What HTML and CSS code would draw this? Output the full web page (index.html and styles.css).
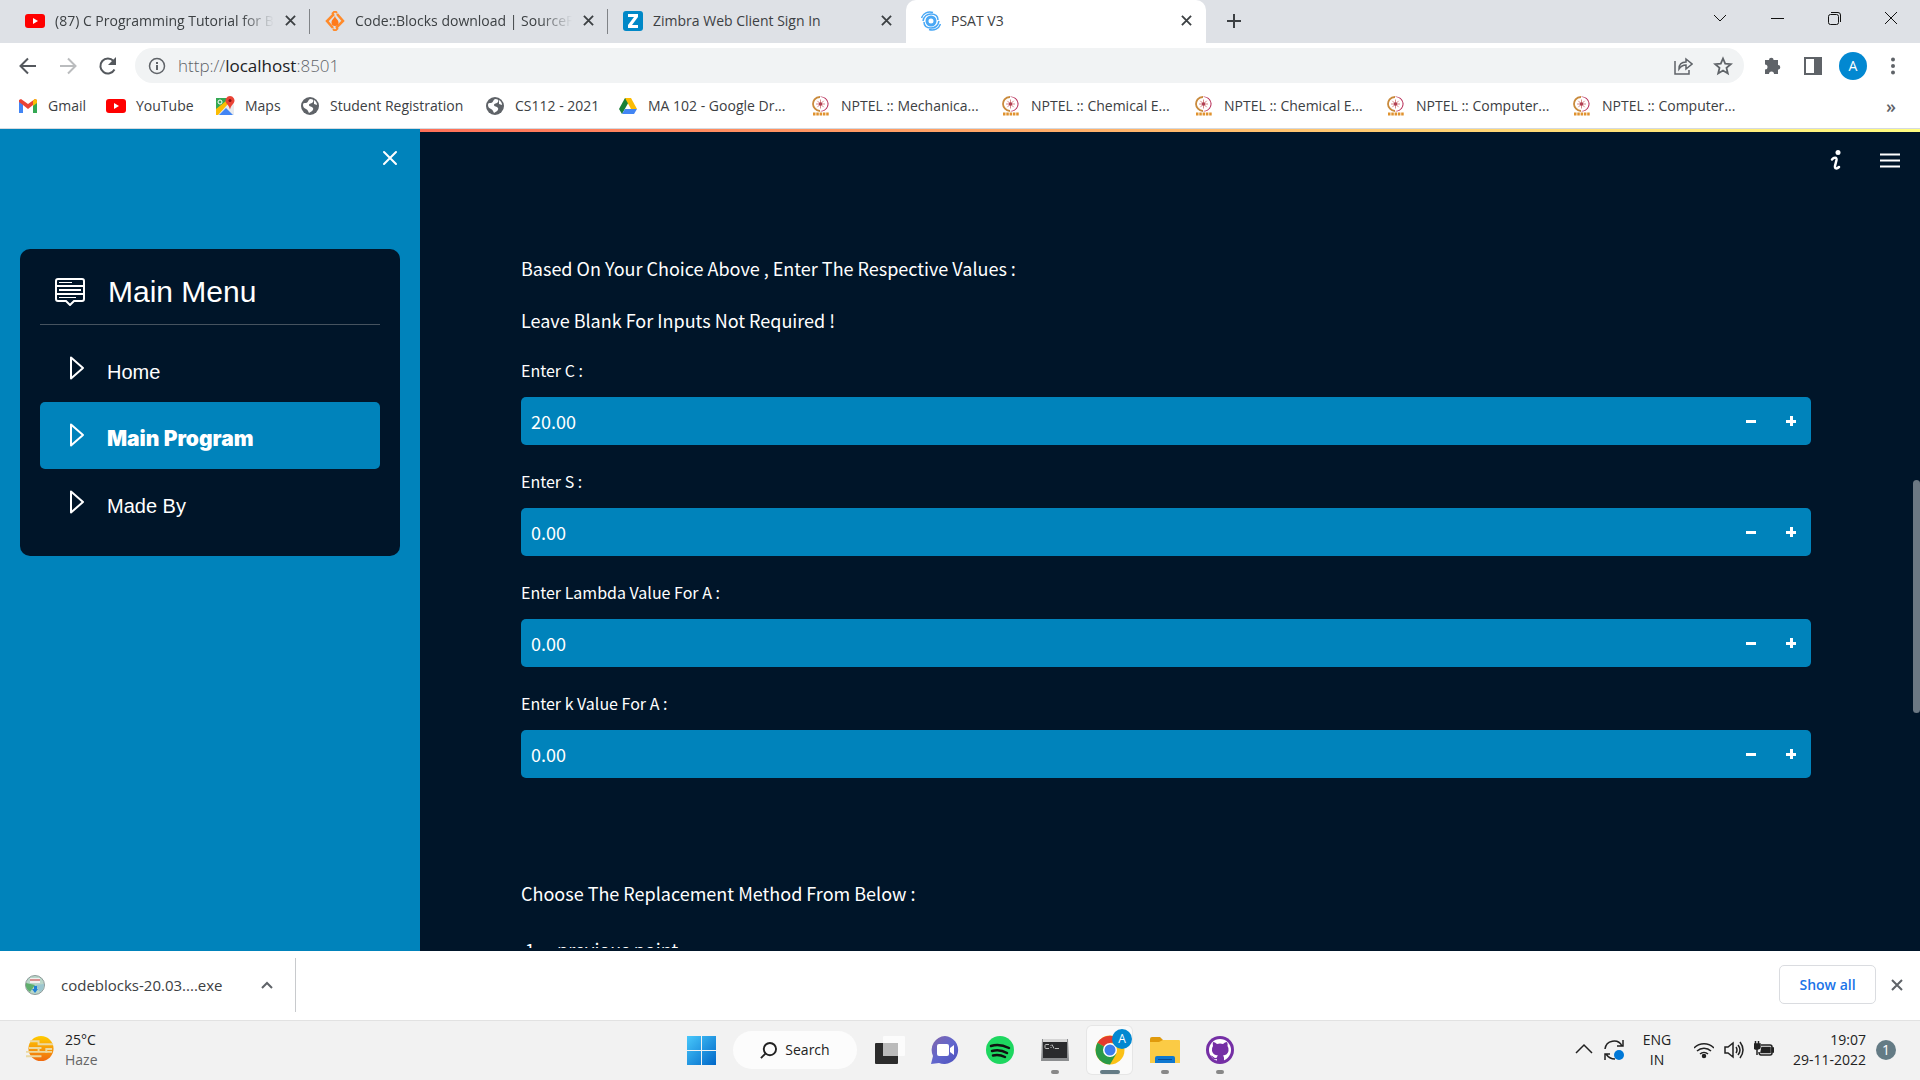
FILE: index.html
```html
<!DOCTYPE html>
<html lang="en">
<head>
<meta charset="utf-8">
<title>PSAT V3</title>
<link rel="stylesheet" href="styles.css">
</head>
<body>
<svg class="defs" aria-hidden="true">
  <defs>
    <symbol id="close" viewBox="0 0 12 12"><path d="M1 1l10 10M11 1L1 11" fill="none" stroke="currentColor" stroke-width="2"/></symbol>
    <symbol id="youtube" viewBox="0 0 20 16"><rect y="1" width="20" height="14" rx="3" fill="#f00"/><path d="M8 5l5 3-5 3z" fill="#fff"/></symbol>
    <symbol id="globe" viewBox="0 0 20 20"><circle cx="10" cy="10" r="9" fill="#5f6368"/><path d="M10 3c3 0 4 1 3 3s-4 1-4 3 3 1 4 3-2 4-4 5c-1-2-1-3-3-4s-3-2-3-4 1-2 3-2 2-3 4-4z" fill="#fff"/><path d="M14 4c2 1 3 3 3 5l-3-1z" fill="#fff"/></symbol>
    <symbol id="nptel" viewBox="0 0 20 20"><path d="M9 1C4 1 2 5 2 8s3 7 7 7" fill="none" stroke="#c98a3c" stroke-width="1.800"/><path d="M9 0.500a7.500 7.500 0 0 1 2 15l-2-.5a7 7 0 0 0 1-14z" fill="#b8305a"/><path d="M9.500 3.500v9M5 8h9M6.300 4.800l6.400 6.400M12.700 4.800l-6.400 6.400" stroke="#d98a8a" stroke-width="1"/><circle cx="9.500" cy="8" r="1.800" fill="#b04055"/><path d="M2 18h16" stroke="#e0922e" stroke-width="3" stroke-dasharray="2.500 .8"/></symbol>
    <symbol id="play" viewBox="0 0 16 24"><path d="M2 1.500v21L14 12z" fill="none" stroke="currentColor" stroke-width="2" stroke-linejoin="round"/></symbol>
  </defs>
</svg>

<header class="tabs">
  <div class="tab">
    <svg class="fav"><use href="#youtube"/></svg>
    <span class="tab-title fade">(87) C Programming Tutorial for Beginners</span>
    <button class="tab-close" aria-label="Close tab"><svg><use href="#close"/></svg></button>
  </div>
  <div class="tab">
    <svg class="fav" viewBox="0 0 20 20"><path d="M9 3l-7 7 6 7M11 17l7-7-6-7" fill="none" stroke="#ff8a2a" stroke-width="2.500"/><path d="M7 3l3-3 2 2M8 18l2 2 3-3" fill="none" stroke="#ff8a2a" stroke-width="2"/><path d="M10 4.500c0 3 3.500 4 3.500 7a3.500 3.500 0 0 1-7 0c0-3 3-4 3.500-7z" fill="#ff7a1a"/></svg>
    <span class="tab-title fade">Code::Blocks download | SourceForge.net</span>
    <button class="tab-close" aria-label="Close tab"><svg><use href="#close"/></svg></button>
  </div>
  <div class="tab last">
    <svg class="fav" viewBox="0 0 20 20"><rect width="20" height="20" rx="3" fill="#0088c7"/><path d="M5 3h10v3L9 14h6v3H5v-3l6-8H5z" fill="#fff"/></svg>
    <span class="tab-title">Zimbra Web Client Sign In</span>
    <button class="tab-close" aria-label="Close tab"><svg><use href="#close"/></svg></button>
  </div>
  <div class="tab active">
    <svg class="fav" viewBox="0 0 20 20" fill="none" stroke="#4aa8f5"><circle cx="10" cy="10" r="4" stroke-width="3"/><path d="M17 9c0-4-3-6-7-6S3 5 2 10M3 11c0 4 3 6 7 6s7-2 8-7" stroke-width="1.500"/><path d="M.5 7C2 2 7 0 12 1.500M19.500 13c-1.500 5-6.500 7-11.500 5.500" stroke-width="1.500"/></svg>
    <span class="tab-title">PSAT V3</span>
    <button class="tab-close" aria-label="Close tab"><svg><use href="#close"/></svg></button>
  </div>
  <button class="new-tab" aria-label="New tab"><svg viewBox="0 0 16 16"><path d="M8 1v14M1 8h14" stroke="currentColor" stroke-width="2"/></svg></button>
  <div class="window-buttons">
    <button aria-label="Search tabs"><svg viewBox="0 0 14 14"><path d="M1 4l6 6 6-6" /></svg></button>
    <button aria-label="Minimize"><svg viewBox="0 0 14 14"><path d="M1 7.500h13"/></svg></button>
    <button aria-label="Restore"><svg viewBox="0 0 14 14"><rect x="1.500" y="3.500" width="10" height="10" rx="2"/><path d="M4 1.500h7a2.500 2.500 0 0 1 2.500 2.500v7"/></svg></button>
    <button aria-label="Close"><svg viewBox="0 0 14 14"><path d="M1 1l12 12M13 1L1 13"/></svg></button>
  </div>
</header>

<div class="toolbar">
  <div class="nav-buttons">
    <button aria-label="Back"><svg viewBox="0 0 20 20"><path d="M18 10H3M10 2.500L2.500 10l7.500 7.500"/></svg></button>
    <button aria-label="Forward" class="off"><svg viewBox="0 0 20 20"><path d="M2 10h15M10 2.500l7.500 7.500-7.500 7.500"/></svg></button>
    <button aria-label="Reload"><svg viewBox="0 0 20 20"><path d="M16.500 13.500A7.500 7.500 0 1 1 15.500 5"/><path d="M18 1v8h-8z" fill="currentColor" stroke="none"/></svg></button>
  </div>
  <div class="omnibox">
    <svg class="info" viewBox="0 0 18 18"><circle cx="9" cy="9" r="7.500" fill="none" stroke="#5f6368" stroke-width="1.500"/><path d="M9 8v5M9 5v2" stroke="#5f6368" stroke-width="2"/></svg>
    <div class="url">http://<b>localhost</b>:8501</div>
    <button aria-label="Share"><svg viewBox="0 0 20 20"><path d="M2 5v13h14v-4M6 13c0-5 3-7 7-7V3l6 5-6 5v-4c-3 0-5 1-7 4z" fill="none" stroke="#5f6368" stroke-width="1.500"/></svg></button>
    <button aria-label="Bookmark"><svg viewBox="0 0 20 20"><path d="M10 2.500l2.200 5.200 5.600.5-4.300 3.700 1.300 5.500L10 14.500l-4.800 2.900 1.300-5.500-4.300-3.700 5.600-.5z" fill="none" stroke="#5f6368" stroke-width="1.800"/></svg></button>
  </div>
  <div class="tools">
    <button aria-label="Extensions"><svg viewBox="0 0 20 20"><path d="M2 4h4a2.300 2.300 0 1 1 4.600 0H15v5a2.300 2.300 0 1 1 0 4.600V18h-4a2.500 2.500 0 0 0-5 0H2v-4.500a2.500 2.500 0 0 0 0-5z" fill="#5f6368"/></svg></button>
    <button aria-label="Side panel"><svg viewBox="0 0 20 20"><path d="M1 1h18v18H1z" fill="#5f6368"/><path d="M3 3h8v14H3z" fill="#fff"/></svg></button>
    <button aria-label="Profile" class="avatar">A</button>
    <button aria-label="More"><svg viewBox="0 0 20 20" fill="#5f6368"><circle cx="10" cy="3.500" r="2"/><circle cx="10" cy="10" r="2"/><circle cx="10" cy="16.500" r="2"/></svg></button>
  </div>
</div>

<nav class="bookmarks" aria-label="Bookmarks">
  <a href="#"><svg viewBox="0 0 20 20"><path d="M1 4v13h4V9l5 4 5-4v8h4V4l-2-1-7 5-7-5z" fill="#ea4335"/><path d="M1 6v11h4V9z" fill="#4285f4"/><path d="M19 6v11h-4V9z" fill="#34a853"/><path d="M15 4.500L17 3q2 0 2 2v2l-4 3z" fill="#fbbc04"/></svg>Gmail</a>
  <a href="#"><svg><use href="#youtube"/></svg>YouTube</a>
  <a href="#"><svg viewBox="0 0 20 20"><path d="M1 2h17v17H1z" fill="#34a853"/><path d="M1 19V16L15 5l4 4v10z" fill="#e8eaed"/><path d="M4 19l7-7 7 7z" fill="#4285f4"/><path d="M1 13v6h2L13 8l-2-3z" fill="#fbbc04"/><path d="M15 0a4.500 4.500 0 0 1 4 6.500c-1 2-3 3-4 7-1-4-3-5-4-7A4.500 4.500 0 0 1 15 0z" fill="#ea4335"/><circle cx="15" cy="4.500" r="1.500" fill="#811"/><circle cx="5" cy="6" r="2" fill="none" stroke="#fff"/></svg>Maps</a>
  <a href="#"><svg><use href="#globe"/></svg>Student Registration</a>
  <a href="#"><svg><use href="#globe"/></svg>CS112 - 2021</a>
  <a href="#"><svg viewBox="0 0 20 20"><path d="M7 2h6l-9 16-3-5z" fill="#188038"/><path d="M7 2h6l6 11h-6z" fill="#fbbc04"/><path d="M4 18l3-5h12l-3 5z" fill="#4285f4"/></svg>MA 102 - Google Dr...</a>
  <a href="#"><svg><use href="#nptel"/></svg>NPTEL :: Mechanica...</a>
  <a href="#"><svg><use href="#nptel"/></svg>NPTEL :: Chemical E...</a>
  <a href="#"><svg><use href="#nptel"/></svg>NPTEL :: Chemical E...</a>
  <a href="#"><svg><use href="#nptel"/></svg>NPTEL :: Computer...</a>
  <a href="#"><svg><use href="#nptel"/></svg>NPTEL :: Computer...</a>
  <button class="overflow" aria-label="More bookmarks">»</button>
</nav>

<div class="page">
  <aside class="sidebar">
    <button class="sidebar-close" aria-label="Close sidebar"><svg viewBox="0 0 16 16"><path d="M2 2l12 12M14 2L2 14" stroke="#fff" stroke-width="2" stroke-linecap="round"/></svg></button>
    <nav class="menu">
      <h2 class="menu-title"><svg viewBox="0 0 30 28" fill="none" stroke="#fff" stroke-width="2"><path d="M3 1h24q2 0 2 2v18q0 2-2 2h-8l-4 4-4-4H3q-2 0-2-2V3q0-2 2-2z"/><path d="M4 4.500h13M4 19.500h17" stroke-width="1"/><path d="M2 8h26M4 12h22M2 16h26"/></svg>Main Menu</h2>
      <a class="item" href="#"><svg><use href="#play"/></svg><span>Home</span></a>
      <a class="item selected" href="#"><svg><use href="#play"/></svg><span>Main Program</span></a>
      <a class="item" href="#"><svg><use href="#play"/></svg><span>Made By</span></a>
    </nav>
  </aside>
  <main class="main">
    <div class="app-bar">
      <button aria-label="Info"><svg viewBox="0 0 20 20"><circle cx="12" cy="2.500" r="2.500" fill="#fff"/><path d="M6 9.500c2-2.500 5-2.500 4.500.5l-1.500 6c-.5 3 2 3 4 1" fill="none" stroke="#fff" stroke-width="2.500" stroke-linecap="round"/></svg></button>
      <button aria-label="Menu"><svg viewBox="0 0 20 20"><path d="M0 4.500h20M0 10.500h20M0 16.500h20" stroke="#fff" stroke-width="2"/></svg></button>
    </div>
    <div class="content">
      <p>Based On Your Choice Above , Enter The Respective Values :</p>
      <p>Leave Blank For Inputs Not Required !</p>
      <div class="field"><label for="c">Enter C :</label>
        <div class="number"><input id="c" type="text" value="20.00"><button class="minus" aria-label="Decrease"></button><button class="minus plus" aria-label="Increase"></button></div></div>
      <div class="field"><label for="s">Enter S :</label>
        <div class="number"><input id="s" type="text" value="0.00"><button class="minus" aria-label="Decrease"></button><button class="minus plus" aria-label="Increase"></button></div></div>
      <div class="field"><label for="l">Enter Lambda Value For A :</label>
        <div class="number"><input id="l" type="text" value="0.00"><button class="minus" aria-label="Decrease"></button><button class="minus plus" aria-label="Increase"></button></div></div>
      <div class="field"><label for="k">Enter k Value For A :</label>
        <div class="number"><input id="k" type="text" value="0.00"><button class="minus" aria-label="Decrease"></button><button class="minus plus" aria-label="Increase"></button></div></div>
      <p class="choose">Choose The Replacement Method From Below :</p>
      <ol><li>previous point</li></ol>
    </div>
    <div class="thumb"></div>
  </main>
</div>

<section class="shelf" aria-label="Downloads">
  <div class="download">
    <svg class="disc" viewBox="0 0 20 20"><circle cx="10" cy="10" r="9.500" fill="#b9d6c9" stroke="#8e9a9a"/><path d="M10 10L1 8a9 9 0 0 0 4 9z" fill="#5fae6c"/><path d="M10 10l9-1a9 9 0 0 1-4 8z" fill="#9cc6cf"/><rect x="5" y="3" width="10" height="5" fill="#f3efef"/><path d="M5 5h10" stroke="#b33"/><path d="M9 11h3v3h1l-3 4-3-4h2z" fill="#1f7fd6"/></svg>
    <span>codeblocks-20.03....exe</span>
    <button aria-label="Download options"><svg viewBox="0 0 12 12"><path d="M1 9l5-5 5 5" fill="none" stroke="#5f6368" stroke-width="2"/></svg></button>
  </div>
  <button class="show-all">Show all</button>
  <button class="shelf-close" aria-label="Close"><svg><use href="#close"/></svg></button>
</section>

<footer class="taskbar">
  <div class="weather">
    <svg viewBox="0 0 30 28"><defs><linearGradient id="sun" x2="0" y2="1"><stop stop-color="#fc0"/><stop offset="1" stop-color="#f06a10"/></linearGradient></defs><circle cx="15.500" cy="13.500" r="13" fill="url(#sun)"/><g fill="none" stroke="#ecd9a0" stroke-width="2"><path d="M4 6h9v3h15"/><path d="M3 13h13M0 17h13v-3M13 17h8v-3h6"/><path d="M0 21.500h16M20 17h7"/></g></svg>
    <div><div>25°C</div><div class="muted">Haze</div></div>
  </div>
  <div class="apps">
    <button aria-label="Start"><svg viewBox="0 0 30 30"><defs><linearGradient id="win" x2="1" y2="1"><stop stop-color="#48c8fb"/><stop offset="1" stop-color="#0067c8"/></linearGradient></defs><path d="M1 1h14v14H1zM16 1h14v14H16zM1 16h14v14H1zM16 16h14v14H16z" fill="url(#win)"/></svg></button>
    <button class="search"><svg viewBox="0 0 18 18"><circle cx="10.500" cy="7.500" r="6.500"/><path d="M6 12l-5 5"/></svg>Search</button>
    <button aria-label="Task view"><svg viewBox="0 0 30 30"><rect y="8" width="23" height="21" rx="1" fill="#2c2c2c"/><rect x="8" y="1" width="22" height="20" rx="1" fill="#fff" opacity=".75"/><rect x="8" y="8" width="15" height="13" fill="#bbb"/></svg></button>
    <button aria-label="Chat"><svg viewBox="0 0 30 30"><defs><linearGradient id="chat" x2="1" y2="1"><stop stop-color="#8465a8"/><stop offset=".5" stop-color="#6267cd"/><stop offset="1" stop-color="#4c50bd"/></linearGradient></defs><path d="M15 1a14 14 0 1 1-6 27l-8 1 2-8A14 14 0 0 1 15 1z" fill="url(#chat)"/><rect x="7" y="9" width="12" height="12" rx="2" fill="#fff"/><path d="M20 13l4-3v10l-4-3z" fill="#fff"/></svg></button>
    <button aria-label="Spotify"><svg viewBox="0 0 30 30"><circle cx="15" cy="15" r="14" fill="#1ed760"/><path d="M6 11c6-2 12-1 18 2M7 16c5-1.500 10-1 15 2M8 20.500c4-1 8-.5 12 1.500" fill="none" stroke="#111" stroke-width="2.500" stroke-linecap="round"/></svg></button>
    <button aria-label="Terminal" class="running"><svg viewBox="0 0 30 30"><path d="M2 4h26l1 22H1z" fill="#8b8d8f"/><path d="M3 4h24v3H3z" fill="#d5d5d5"/><rect x="3" y="7" width="24" height="16" fill="#2a2b2d"/><path d="M9 9.500H6q-1 0-1 1v2q0 1 1 1h3M11 10v1M11 12v1M12 9.500l2 4M15 13.500h4" stroke="#bbb" fill="none"/></svg></button>
    <button aria-label="Chrome" class="running current">
      <svg viewBox="0 0 30 30"><circle cx="15" cy="15" r="14.500" fill="#fbc116"/><path d="M15 15L2.500 7.800A14.500 14.500 0 0 1 27.500 7.800H15z" fill="#e33b2e"/><path d="M15 15L2.500 7.800A14.500 14.500 0 0 0 15 29.500l6.500-11z" fill="#2a9a47"/><circle cx="15" cy="15" r="7" fill="#fff"/><circle cx="15" cy="15" r="5.500" fill="#3b7ded"/></svg>
      <span class="badge">A</span></button>
    <button aria-label="File Explorer" class="running"><svg viewBox="0 0 30 30"><path d="M0 4q0-2 2-2h8l3 3v4H0z" fill="#e09a0c"/><path d="M0 7h9l4-2h16q1 0 1 1v22H0z" fill="#fbcb45"/><path d="M5 28v-5q0-2 2-2h16q2 0 2 2v5z" fill="#0f78d0"/><path d="M8 24.500h14" stroke="#0a4c94"/></svg></button>
    <button aria-label="GitHub" class="running"><svg viewBox="0 0 30 30"><circle cx="15" cy="15" r="14" fill="#752fa5"/><circle cx="15" cy="15" r="11" fill="#fff"/><path d="M8 7q2 0 4 2 3-1 6 0 2-2 4-2 1 2 .5 4 1.500 2 1 5-1 4-5.500 4.500 1 1 1 2.500v4h-7v-3q-4 1-5-2-1-1-2-1.500 2-.500 3.500 1.500 1.500 1.500 3.500.5 0-1.500 1-2Q8 20 7 16q-.5-3 1-5-.5-2 0-4z" fill="#752fa5"/></svg></button>
  </div>
  <div class="tray">
    <button aria-label="Hidden icons"><svg viewBox="0 0 20 20"><path d="M2 13l8-8 8 8"/></svg></button>
    <button aria-label="Update"><svg viewBox="0 0 20 20"><path d="M1 9a9 9 0 0 1 17-3M19 0v6h-6M1 20v-6h5M2 14c2 3 5 5 9 5"/><circle cx="15" cy="15" r="5" fill="#0078d7" stroke="none"/></svg></button>
    <div class="lang">ENG<br>IN</div>
    <button aria-label="Network"><svg viewBox="0 0 20 20"><path d="M0 8a14 14 0 0 1 20 0M3 11a10 10 0 0 1 14 0M6 14a6 6 0 0 1 8 0"/><circle cx="10" cy="16" r="1.500" fill="#222"/></svg></button>
    <button aria-label="Volume"><svg viewBox="0 0 20 20"><path d="M1 7h3l5-4v14l-5-4H1zM12 7q2 3 0 6M14 5q4 5 0 10M16 2q6 8 0 16"/></svg></button>
    <button aria-label="Battery"><svg viewBox="0 0 20 20"><path d="M7 5h9q2 0 2 2v6q0 2-2 2H7q-2 0-2-3"/><path d="M8 7.500h8v5H7zM0 4h6v3q0 2-3 2t-3-2zM18 8h2v4h-2z" fill="#222"/><path d="M1.500 1v3M4.500 1v3M3 9v6"/></svg></button>
    <div class="clock">19:07<br>29-11-2022</div>
    <span class="count">1</span>
  </div>
</footer>
</body>
</html>
```
FILE: styles.css
```css
* { box-sizing: border-box; }
body {
  margin: 0;
  height: 100vh;
  display: flex;
  flex-direction: column;
  overflow: hidden;
  font: 14px/20px "Open Sans", "Noto Sans", sans-serif;
  color: #3c4043;
  background: #fff;
}
button {
  display: flex;
  align-items: center;
  justify-content: center;
  padding: 0;
  border: 0;
  background: none;
  font: inherit;
  color: inherit;
}
a { color: inherit; text-decoration: none; }
svg { display: block; flex: none; }
.defs { position: absolute; width: 0; height: 0; }

/* Tab strip */
.tabs { display: flex; flex: none; height: 43px; background: #dee1e6; }
.tab {
  display: flex;
  align-items: center;
  width: 298px;
  height: 43px;
  padding: 0 10px 2px 15px;
  position: relative;
}
.tab:first-child { width: 310px; padding-left: 25px; }
.tab:not(.last):not(.active)::after {
  content: "";
  position: absolute;
  right: 0;
  top: 9px;
  width: 1px;
  height: 25px;
  background: #808387;
}
.active { width: 300px; background: #fff; border-radius: 10px 10px 0 0; }
.fav { width: 20px; height: 20px; margin-right: 10px; }
.tab-title { flex: 1; overflow: hidden; white-space: nowrap; }
.fade { -webkit-mask-image: linear-gradient(90deg, #000 85%, transparent); mask-image: linear-gradient(90deg, #000 85%, transparent); }
.tab-close { width: 20px; height: 20px; margin-left: 6px; }
.tab-close svg { width: 11px; height: 11px; }
.new-tab { width: 56px; height: 41px; }
.new-tab svg { width: 16px; height: 16px; }
.window-buttons { display: flex; margin-left: auto; padding-right: 1px; color: #111; }
.window-buttons button { width: 57px; height: 36px; }
.window-buttons svg { width: 14px; height: 14px; fill: none; stroke: currentColor; }

/* Toolbar */
.toolbar { display: flex; flex: none; align-items: center; height: 45px; }
.nav-buttons { display: flex; width: 135px; padding-left: 8px; color: #54585d; }
.nav-buttons button { width: 40px; height: 40px; }
.nav-buttons svg { width: 20px; height: 20px; fill: none; stroke: currentColor; stroke-width: 2; }
.nav-buttons .off { color: #babcbe; }
.omnibox {
  display: flex;
  flex: 1;
  align-items: center;
  height: 35px;
  padding: 0 1px 0 13px;
  border-radius: 18px;
  background: #f1f3f4;
}
.omnibox button, .tools button { width: 40px; height: 36px; }
.omnibox button svg, .tools button svg { width: 20px; height: 20px; }
.info { width: 18px; height: 18px; }
.url { flex: 1; margin-left: 12px; font-size: 17px; font-weight: 300; color: #5f6368; }
.url b { font-weight: 400; color: #202124; }
.tools { display: flex; align-items: center; width: 176px; padding-left: 9px; }
.tools .avatar { width: 28px; height: 28px; margin: 0 6px; border-radius: 50%; background: #0288d1; color: #fff; }

/* Bookmarks */
.bookmarks {
  display: grid;
  grid-template-columns: 88px 109px 85px 185px 133px 193px 190px 193px 192px 186px 186px 1fr;
  flex: none;
  align-items: center;
  height: 41px;
  padding: 0 24px 4px 18px;
  border-bottom: 1px solid #d5dae0;
}
.bookmarks a { display: flex; align-items: center; gap: 10px; white-space: nowrap; }
.bookmarks svg { width: 20px; height: 20px; }
.overflow { justify-self: end; font-size: 18px; font-weight: 600; color: #5f6368; }

/* Web app */
.page { display: flex; flex: 1; min-height: 0; background: #001529; color: #fff; }
.sidebar { width: 420px; flex: none; padding: 0 20px; background: #0083bb; }
.sidebar-close { width: 40px; height: 58px; margin-left: auto; margin-right: -10px; }
.sidebar-close svg { width: 16px; height: 16px; }
.menu {
  margin-top: 62px;
  padding: 20px;
  border-radius: 10px;
  background: #001529;
  font: 20px/24px "Liberation Sans", Arial, sans-serif;
}
.menu-title {
  display: flex;
  align-items: center;
  gap: 23px;
  height: 56px;
  margin: 0 0 10px;
  padding: 0 15px 10px;
  border-bottom: 1px solid #46535f;
  font-size: 30px;
  line-height: 36px;
  font-weight: 400;
}
.menu-title svg { width: 30px; height: 28px; }
.item { display: flex; align-items: center; gap: 22px; height: 67px; padding: 0 29px; border-radius: 5px; }
.item svg { width: 16px; height: 24px; margin-bottom: 2px; }
.item span { padding-top: 6px; }
.selected { background: #0083bb; font-family: Inter, "Liberation Sans", sans-serif; font-size: 21px; font-weight: 900; }

.main {
  position: relative;
  flex: 1;
  min-width: 0;
  overflow: hidden;
  border-bottom: 3px solid #001529;
  font-family: "Noto Sans CJK SC", "Noto Sans", sans-serif;
}
.main::before {
  content: "";
  display: block;
  height: 3px;
  background: linear-gradient(90deg, #ff7058, #ffb86c 50%, #fffd80);
}
.app-bar { display: flex; justify-content: flex-end; gap: 34px; padding: 18px 20px 0; }
.app-bar button, .app-bar svg { width: 20px; height: 20px; }
.content { padding: 84px 109px 0 101px; font-size: 18px; line-height: 28px; }
.content p { margin: 0 0 24px; }
.field { margin-bottom: 24px; }
.field label { display: block; height: 39px; font-size: 16px; line-height: 24px; }
.number { display: flex; align-items: center; height: 48px; border-radius: 5px; background: #0083bb; }
.number input {
  flex: 1;
  min-width: 0;
  height: 48px;
  padding: 0 10px;
  border: 0;
  background: none;
  color: #fff;
  font: 18px/28px "Noto Sans CJK SC", "Noto Sans", sans-serif;
}
.minus {
  width: 40px;
  height: 48px;
  background: linear-gradient(#fff, #fff) center / 10px 3px no-repeat;
}
.plus { background: linear-gradient(#fff, #fff) center / 10px 3px no-repeat, linear-gradient(#fff, #fff) center / 3px 10px no-repeat; }
.content .choose { margin: 101px 0 28px; }
.content ol { margin: 0; padding-left: 4px; list-style: none; counter-reset: step; }
.content li::before { content: counter(step) "."; counter-increment: step; display: inline-block; width: 32px; }
.thumb { position: absolute; right: 0; top: 351px; width: 7px; height: 233px; border-radius: 4px; background: #6b7883; }

/* Download shelf */
.shelf { display: flex; flex: none; align-items: center; height: 69px; padding: 0 13px 2px 0; }
.download { display: flex; align-items: center; width: 296px; height: 54px; padding-left: 25px; border-right: 1px solid #c8cacd; }
.disc { width: 20px; height: 20px; margin-right: 16px; }
.download span { flex: 1; font-size: 15px; }
.download button { width: 40px; height: 40px; margin-right: 8px; }
.download button svg { width: 12px; height: 12px; }
.show-all {
  width: 97px;
  height: 39px;
  margin-left: auto;
  border: 1px solid #dadce0;
  border-radius: 5px;
  color: #1a73e8;
  font-weight: 600;
}
.shelf-close { width: 20px; height: 20px; margin-left: 11px; color: #5f6368; }
.shelf-close svg { width: 12px; height: 12px; }

/* Taskbar */
.taskbar {
  display: grid;
  grid-template-columns: 1fr auto 1fr;
  flex: none;
  align-items: center;
  height: 60px;
  padding-bottom: 1px;
  border-top: 1px solid #e2e2e2;
  background: #f2f2f2;
  color: #222;
}
.weather { display: flex; align-items: center; gap: 10px; padding-left: 26px; }
.weather svg { width: 29px; height: 28px; margin-bottom: 2px; }
.muted { color: #666; }
.apps { display: flex; align-items: center; }
.apps button { position: relative; width: 55px; height: 48px; }
.apps > button > svg { width: 30px; height: 30px; }
.apps .search { width: 124px; height: 38px; margin: 0 5px; gap: 8px; border-radius: 19px; background: #fcfcfc; }
.apps .search svg { width: 17px; height: 17px; fill: none; stroke: #222; stroke-width: 2; }
.running::after { content: ""; position: absolute; bottom: 0; width: 8px; height: 4px; border-radius: 2px; background: #888; }
.apps .current { width: 45px; margin: 0 5px; border-radius: 5px; background: #fafafa; box-shadow: 0 0 0 1px #e6e6e6; }
.current::after { width: 20px; background: #647b85; }
.badge {
  position: absolute;
  right: 0;
  top: 3px;
  width: 20px;
  height: 20px;
  border-radius: 50%;
  background: #0288d1;
  color: #fff;
  font-size: 12px;
}
.tray { display: flex; align-items: center; justify-content: flex-end; padding-right: 24px; }
.tray button { width: 30px; height: 40px; }
.tray svg { width: 20px; height: 20px; fill: none; stroke: #222; stroke-width: 1.500; }
.lang { width: 56px; margin-right: 4px; text-align: center; }
.clock { width: 87px; text-align: right; }
.count { width: 20px; height: 20px; margin-left: 10px; border-radius: 50%; background: #647b85; color: #fff; text-align: center; }
```
